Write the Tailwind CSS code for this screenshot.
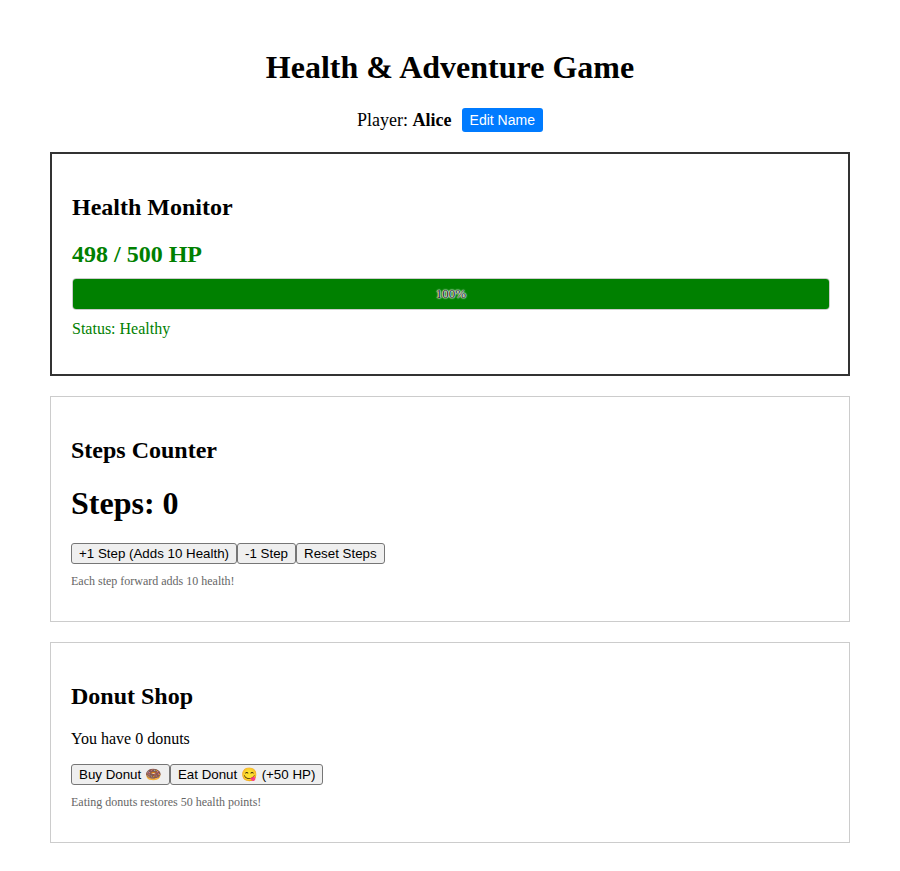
<!DOCTYPE html>
<html lang="en">

<head>
    <meta charset="UTF-8">
    <meta name="viewport" content="width=device-width, initial-scale=1.0">
    <title>Health &amp; Adventure Game</title>
    <script src="https://cdn.jsdelivr.net/npm/@tailwindcss/browser@4"></script>
</head>

<body class="bg-white text-black font-['Liberation_Serif',serif]">
<div class="w-[800px] mx-auto pt-[49px] pb-[28px]">
    <h1 class="text-[32px] leading-[37px] font-bold text-center mb-[22px]">Health &amp; Adventure Game</h1>

    <div class="flex items-center justify-center h-[24px] mb-[20px] text-[18px]">
        <span>Player: <strong>Alice</strong></span>
        <button class="ml-[10px] h-[24px] px-[8px] rounded-[3px] bg-[#007bff] text-white text-[14px] font-['Liberation_Sans',sans-serif]">Edit Name</button>
    </div>

    <section class="h-[224px] border-2 border-[#333333] px-[20px] pt-[40px] mb-[20px]">
        <h2 class="text-[24px] leading-[27px] font-bold mb-[20px]">Health Monitor</h2>
        <h3 class="text-[24px] leading-[27px] font-bold text-[#008000] mb-[10px]">498 / 500 HP</h3>
        <div class="w-[758px] h-[32px] border border-[#cccccc] rounded-[4px] overflow-hidden">
            <div class="h-full bg-[#008000] flex items-center justify-center text-[13px] text-[#222222] [text-shadow:0_0_1px_white,0_0_1px_white,0_0_2px_white,0_0_2px_white]">100%</div>
        </div>
        <p class="text-[16px] leading-[18px] text-[#008000] mt-[10px]">Status: Healthy</p>
    </section>

    <section class="h-[226px] border border-[#cccccc] px-[20px] pt-[40px] mb-[20px]">
        <h2 class="text-[24px] leading-[27px] font-bold mb-[21px]">Steps Counter</h2>
        <p class="text-[32px] leading-[37px] font-bold mb-[21px]">Steps: 0</p>
        <div class="flex">
            <button class="h-[21px] px-[7px] border border-[#767676] rounded-[3px] bg-[#efefef] text-[13.333px] font-['Liberation_Sans',sans-serif]">+1 Step (Adds 10 Health)</button>
            <button class="h-[21px] px-[7px] border border-[#767676] rounded-[3px] bg-[#efefef] text-[13.333px] font-['Liberation_Sans',sans-serif]">-1 Step</button>
            <button class="h-[21px] px-[7px] border border-[#767676] rounded-[3px] bg-[#efefef] text-[13.333px] font-['Liberation_Sans',sans-serif]">Reset Steps</button>
        </div>
        <p class="text-[12px] leading-[14px] text-[#666666] mt-[10px]">Each step forward adds 10 health!</p>
    </section>

    <section class="h-[201px] border border-[#cccccc] px-[20px] pt-[40px]">
        <h2 class="text-[24px] leading-[27px] font-bold mb-[20px]">Donut Shop</h2>
        <p class="text-[16px] leading-[18px] mb-[16px]">You have 0 donuts</p>
        <div class="flex">
            <button class="h-[21px] px-[7px] border border-[#767676] rounded-[3px] bg-[#efefef] text-[13.333px] font-['Liberation_Sans',sans-serif]">Buy Donut 🍩</button>
            <button class="h-[21px] px-[7px] border border-[#767676] rounded-[3px] bg-[#efefef] text-[13.333px] font-['Liberation_Sans',sans-serif]">Eat Donut 😋 (+50 HP)</button>
        </div>
        <p class="text-[12px] leading-[14px] text-[#666666] mt-[10px]">Eating donuts restores 50 health points!</p>
    </section>
</div>
</body>

</html>
